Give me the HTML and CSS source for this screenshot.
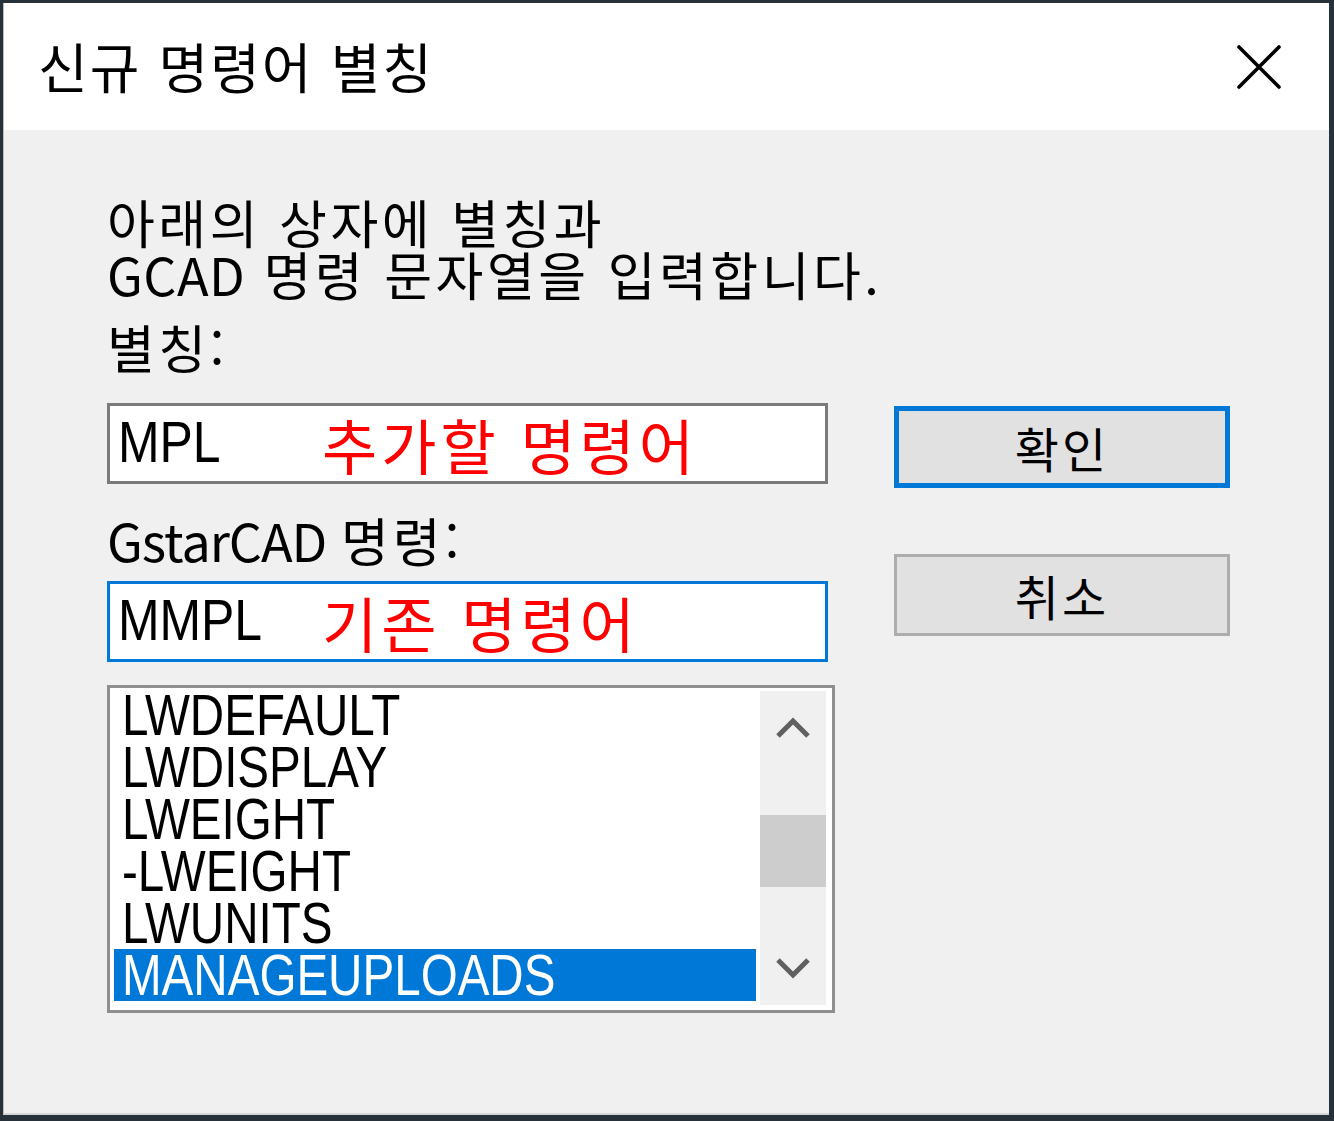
FILE: index.html
```html
<!DOCTYPE html>
<html lang="ko">
<head>
<meta charset="utf-8">
<title>신규 명령어 별칭</title>
<link rel="stylesheet" href="styles.css">
</head>
<body>
<div class="window">
  <div class="titlebar">
    <span class="title">신규 명령어 별칭</span>
    <div class="close" aria-label="닫기">
      <svg width="44" height="44" viewBox="0 0 44 44"><path d="M2 2 L42 42 M42 2 L2 42" stroke="#000" stroke-width="3.6" fill="none" stroke-linecap="round"/></svg>
    </div>
  </div>
  <div class="content">
    <div class="form">
      <p class="intro">아래의 상자에 별칭과<br><span class="latin">GCAD</span> 명령 문자열을 입력합니다.</p>
      <div class="label label-alias">별칭:</div>
      <div class="edit"><span class="value">MPL</span><span class="note">추가할 명령어</span></div>
      <div class="label label-cmd"><span class="latin">GstarCAD</span> <span class="ko">명령:</span></div>
      <div class="edit focused"><span class="value">MMPL</span><span class="note">기존 명령어</span></div>
      <div class="listbox">
        <ul class="items">
          <li><span class="item">LWDEFAULT</span></li>
          <li><span class="item">LWDISPLAY</span></li>
          <li><span class="item">LWEIGHT</span></li>
          <li><span class="item">-LWEIGHT</span></li>
          <li><span class="item">LWUNITS</span></li>
          <li class="selected"><span class="item">MANAGEUPLOADS</span></li>
        </ul>
        <div class="scrollbar">
          <div class="arrow">
            <svg width="36" height="22" viewBox="0 0 36 22"><path d="M3 19 L18 4 L33 19" stroke="#606060" stroke-width="5" fill="none"/></svg>
          </div>
          <div class="track"><div class="thumb"></div></div>
          <div class="arrow">
            <svg width="36" height="22" viewBox="0 0 36 22"><path d="M3 3 L18 18 L33 3" stroke="#606060" stroke-width="5" fill="none"/></svg>
          </div>
        </div>
      </div>
    </div>
    <div class="buttons">
      <div class="btn default">확인</div>
      <div class="btn">취소</div>
    </div>
  </div>
</div>
</body>
</html>
```
FILE: styles.css
```css
html, body {
  margin: 0;
  padding: 0;
}
body {
  width: 1334px;
  height: 1121px;
  box-sizing: border-box;
  background: #27313a;
  padding: 3px 5px 6px 3px;
  font-family: "Noto Sans CJK KR", "Noto Sans", sans-serif;
  color: #000;
}
.window {
  height: 100%;
  background: #f0f0f0;
  border-left: 1px solid #b9bcbf;
  border-bottom: 2px solid #d4d6d8;
  box-sizing: border-box;
  display: flex;
  flex-direction: column;
}
.titlebar {
  height: 127px;
  flex: none;
  background: #fff;
  display: flex;
  align-items: center;
  padding-left: 34px;
}
.title {
  font-size: 54px;
  letter-spacing: 2px;
  line-height: 1;
  flex: 1;
  margin-top: -2px;
}
.close {
  width: 140px;
  height: 127px;
  display: flex;
  align-items: center;
  justify-content: center;
}
.content {
  display: flex;
  padding-left: 103px;
  column-gap: 59px;
}
.form {
  width: 728px;
  display: flex;
  flex-direction: column;
  padding-top: 66px;
}
.intro {
  margin: 0;
  font-size: 52px;
  line-height: 52px;
  letter-spacing: 3.5px;
  white-space: nowrap;
}
.intro .latin {
  letter-spacing: 0.5px;
}
.label {
  font-size: 52px;
  line-height: 52px;
  letter-spacing: 3.5px;
  white-space: nowrap;
}
.label-alias {
  margin-top: 21px;
}
.label-cmd {
  margin-top: 30px;
  letter-spacing: 0;
}
.label-cmd .latin {
  letter-spacing: -1px;
}
.label-cmd .ko {
  letter-spacing: 4px;
}
.edit {
  position: relative;
  width: 721px;
  height: 81px;
  box-sizing: border-box;
  border: 3px solid #7a7a7a;
  background: #fff;
  display: flex;
  align-items: center;
  padding-left: 8px;
  margin-top: 30px;
}
.edit.focused {
  border-color: #0078d7;
  margin-top: 15px;
}
.value {
  display: inline-block;
  font-family: "Liberation Sans", Arial, sans-serif;
  font-size: 58px;
  line-height: 1;
  margin-top: -4px;
  transform: scaleX(0.86);
  transform-origin: left center;
}
.note {
  position: absolute;
  left: 212px;
  top: 2px;
  font-size: 60px;
  line-height: 72px;
  letter-spacing: 4px;
  color: #ff0000;
  white-space: nowrap;
}
.listbox {
  margin-top: 23px;
  width: 728px;
  height: 328px;
  box-sizing: border-box;
  border: 3px solid #8e8f91;
  background: #fff;
  padding: 1px 6px 5px 4px;
  display: flex;
}
.items {
  list-style: none;
  margin: 0;
  padding: 0;
  flex: 1;
  min-width: 0;
  font-family: "Liberation Sans", Arial, sans-serif;
  font-size: 58px;
}
.items li {
  height: 52px;
  line-height: 52px;
  padding-left: 8px;
  white-space: nowrap;
}
.item {
  display: inline-block;
  transform: scaleX(0.82);
  transform-origin: left center;
}
.items li.selected {
  background: #0078d7;
  color: #fff;
  margin-right: 4px;
}
.scrollbar {
  width: 66px;
  flex: none;
  background: #f0f0f0;
  margin-top: 2px;
  display: flex;
  flex-direction: column;
}
.arrow {
  height: 74px;
  flex: none;
  display: flex;
  align-items: center;
  justify-content: center;
}
.track {
  flex: 1;
  padding-top: 50px;
}
.thumb {
  height: 72px;
  background: #cdcdcd;
}
.buttons {
  width: 336px;
  display: flex;
  flex-direction: column;
  gap: 66px;
  padding-top: 276px;
}
.btn {
  height: 82px;
  box-sizing: border-box;
  background: #e1e1e1;
  border: 3px solid #adadad;
  display: flex;
  align-items: center;
  justify-content: center;
  font-size: 48px;
  letter-spacing: 3px;
  line-height: 1;
}
.btn.default {
  border: 5px solid #0078d7;
}
```
